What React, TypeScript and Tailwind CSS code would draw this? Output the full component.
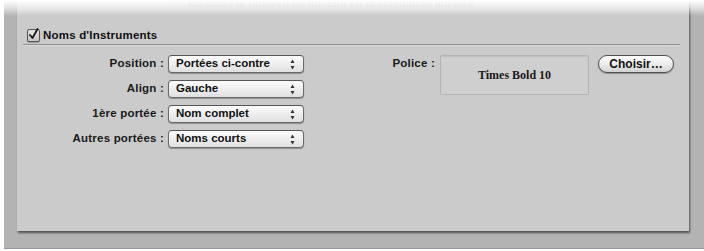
import React from "react";

const font = { fontFamily: '"Liberation Sans", Arial, sans-serif' };

function Check() {
  return (
    <div className="relative shrink-0 w-[13px] h-[13px] rounded-[2px] border border-[#555555] bg-[#e2e2e2] shadow-[inset_0_-4px_4px_rgba(0,0,0,0.12),0_1px_1px_rgba(0,0,0,0.25)]">
      <svg className="absolute left-[-1px] top-[-3px]" width="14" height="14" viewBox="0 0 14 14">
        <path d="M3 8 L5.5 11 L10.5 2" fill="none" stroke="#1e1e1e" strokeWidth="1.9" strokeLinecap="round" strokeLinejoin="round" />
      </svg>
    </div>
  );
}

function Popup({ text }: { text: string }) {
  return (
    <div className="relative w-[136px] h-[18px] rounded-[4px] border border-[#6a6a6a] border-t-[#555] bg-gradient-to-b from-[#fbfbfb] via-[#eeeeee] to-[#e0e0e0] shadow-[0_1px_1px_rgba(0,0,0,0.3)] flex items-center pl-[7px]">
      <span className="text-[11.5px] font-bold text-[#111] leading-none">{text}</span>
      <svg className="absolute right-[8px] top-[3px]" width="5" height="11" viewBox="0 0 5 11">
        <path d="M2.5 0.5 L4.5 4 L0.5 4 Z" fill="#333" />
        <path d="M2.5 10.5 L4.5 7 L0.5 7 Z" fill="#333" />
      </svg>
    </div>
  );
}

function Label({ text }: { text: string }) {
  return (
    <div className="h-[18px] flex items-center justify-end text-[11.5px] font-bold text-[#1a1a1a] leading-none tracking-[0.2px]">
      {text}
    </div>
  );
}

export default function App() {
  const rows = [
    ["Position :", "Portées ci-contre"],
    ["Align :", "Gauche"],
    ["1ère portée :", "Nom complet"],
    ["Autres portées :", "Noms courts"],
  ];
  return (
    <div className="relative w-[704px] h-[251px] bg-white overflow-hidden" style={font}>
      <div className="ml-[4px] w-[700px] h-[249px] bg-[#b3b3b3] border-b border-[#999] pl-[13px] pr-[15px] pb-[17px]">
        <div className="h-full bg-[#cbcbcb] shadow-[1px_2px_2px_rgba(0,0,0,0.55)] flex flex-col">
          {/* faint cut-off row */}
          <div className="h-[7px] overflow-hidden flex items-end pl-[153px] gap-[7px]">
            <div className="shrink-0 w-[11px] h-[11px] mb-[-5px] border border-[#c0c0c0] rounded-[2px]" />
            <span className="text-[11px] font-bold text-[#b0b0b0] leading-none mb-[-3px] whitespace-nowrap">
              Masquer le numéro de mesure en présentation linéaire
            </span>
          </div>
          {/* heading */}
          <div className="mt-[22px] h-[13px] flex items-center pl-[10px]">
            <Check />
            <span className="text-[11.5px] font-bold text-[#111] leading-none ml-[3px] tracking-[0.2px]">Noms d'Instruments</span>
          </div>
          {/* separator */}
          <div className="mt-[2px] ml-[6px] mr-[9px] h-[2px] border-t border-[#8e8e8e] border-b border-b-[#dcdcdc]" />
          {/* content */}
          <div className="mt-[9px] flex items-start">
            <div className="grid grid-cols-[147px_136px] gap-x-[4px] gap-y-[7px]">
              {rows.map(([l, v]) => (
                <React.Fragment key={l}>
                  <Label text={l} />
                  <Popup text={v} />
                </React.Fragment>
              ))}
            </div>
            <div className="w-[131px] h-[18px] flex items-center justify-end text-[11.5px] font-bold text-[#1a1a1a] leading-none tracking-[0.2px]">
              Police :
            </div>
            <div className="ml-[5px] w-[149px] h-[40px] rounded-[2px] border border-[#b4b4b4] bg-[#cfcfcf] shadow-[inset_0_1px_1px_rgba(0,0,0,0.08)] flex items-center justify-center">
              <span
                className="text-[12px] font-bold text-[#1a1a1a] leading-none"
                style={{ fontFamily: '"Liberation Serif", "Times New Roman", serif' }}
              >
                Times Bold 10
              </span>
            </div>
            <div className="ml-[9px] w-[76px] h-[18px] rounded-full border border-[#4f4f4f] bg-gradient-to-b from-[#fdfdfd] via-[#ececec] to-[#d2d2d2] shadow-[0_1px_1px_rgba(0,0,0,0.3)] flex items-center justify-center">
              <span className="text-[12px] font-bold text-[#111] leading-none">Choisir…</span>
            </div>
          </div>
        </div>
      </div>
      {/* top fade */}
      <div className="absolute left-0 top-0 w-full h-[16px] bg-gradient-to-b from-white via-white/60 to-transparent pointer-events-none" />
    </div>
  );
}
